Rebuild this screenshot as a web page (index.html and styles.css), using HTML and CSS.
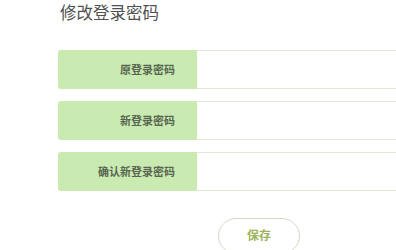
FILE: index.html
```html
<!DOCTYPE html>
<html lang="zh-CN">
<head>
<meta charset="utf-8">
<link rel="stylesheet" href="styles.css">
</head>
<body>
<div class="page">
  <h1 class="title">修改登录密码</h1>
  <div class="form">
    <div class="row">
      <div class="label">原登录密码</div>
      <div class="input"></div>
    </div>
    <div class="row">
      <div class="label">新登录密码</div>
      <div class="input"></div>
    </div>
    <div class="row">
      <div class="label">确认新登录密码</div>
      <div class="input"></div>
    </div>
  </div>
  <button class="save">保存</button>
</div>
</body>
</html>
```
FILE: styles.css
```css
html, body {
  margin: 0;
  padding: 0;
  background: #ffffff;
}
.page {
  padding: 1px 0 0 58px;
  font-family: "Noto Sans CJK SC", "Noto Sans", sans-serif;
}
.title {
  margin: 0;
  font-size: 16.5px;
  line-height: 22px;
  font-weight: normal;
  color: #505050;
  padding-left: 2px;
}
.form {
  margin-top: 27px;
  display: flex;
  flex-direction: column;
  gap: 12px;
}
.row {
  display: flex;
  height: 39px;
}
.label {
  flex: 0 0 139px;
  box-sizing: border-box;
  background: #c9ebb2;
  border-radius: 3px 0 0 3px;
  text-align: right;
  padding-right: 22px;
  font-size: 11px;
  line-height: 39px;
  font-weight: bold;
  color: #58654f;
}
.input {
  flex: 1 1 auto;
  box-sizing: border-box;
  border-top: 1px solid #dfe9d9;
  border-bottom: 1px solid #dfe9d9;
  background: #ffffff;
}
.save {
  display: block;
  margin: 27px 0 0 160px;
  width: 82px;
  height: 36px;
  border: 1.5px solid #d3dbc6;
  border-radius: 18px;
  background: #ffffff;
  font-family: "Noto Sans CJK SC", sans-serif;
  font-size: 12px;
  line-height: 32px;
  font-weight: bold;
  color: #9db35c;
  padding: 0 0 2px 0;
}
```
